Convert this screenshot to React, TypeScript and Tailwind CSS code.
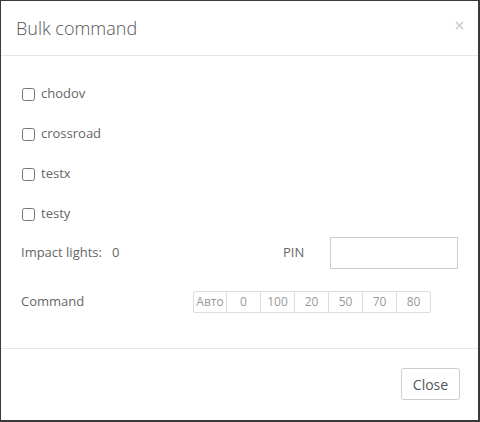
import { X } from 'lucide-react';

const lights = ['chodov', 'crossroad', 'testx', 'testy'];
const commands = ['Авто', '0', '100', '20', '50', '70', '80'];

export default function App() {
  return (
    <div className="w-[480px] h-[422px] bg-[#3a3a3a] pt-px pl-px font-['Open_Sans',sans-serif]">
      <div className="w-[477px] h-[419px] bg-white flex flex-col">
        {/* Header */}
        <div className="h-[55px] flex items-center justify-between pl-[15px] pr-[12px] border-b border-[#e5e5e5]">
          <span className="text-[18px] font-light text-[#555] leading-none -mt-px">Bulk command</span>
          <X className="w-[13px] h-[13px] text-[#c8c8c8] -mt-[6px]" strokeWidth={2.5} />
        </div>

        {/* Body */}
        <div className="flex-1 pl-[20px] pt-[18px] text-[13px] text-[#666]">
          {lights.map(name => (
            <label key={name} className="h-[40px] flex items-center gap-[6px]">
              <input type="checkbox" className="m-0 ml-px w-[13px] h-[13px]" />
              <span>{name}</span>
            </label>
          ))}

          <div className="h-[38px] flex items-center">
            <span className="w-[91px]">Impact lights:</span>
            <span className="w-[171px]">0</span>
            <span className="w-[47px]">PIN</span>
            <input className="w-[128px] h-[32px] border border-[#ccc] outline-none" />
          </div>

          <div className="mt-[19px] h-[22px] flex items-center">
            <span className="w-[172px]">Command</span>
            <div className="flex">
              {commands.map((c, i) => (
                <span
                  key={c}
                  className={`h-[22px] flex items-center justify-center border border-[#ddd] text-[#999] text-[12px] ${
                    i === 0 ? 'w-[34px] rounded-l-[2px]' : '-ml-px w-[35px]'
                  } ${i === commands.length - 1 ? 'rounded-r-[2px]' : ''}`}
                >
                  {c}
                </span>
              ))}
            </div>
          </div>
        </div>

        {/* Footer */}
        <div className="h-[72px] border-t border-[#e5e5e5] flex justify-end items-start pt-[19px] pr-[18px]">
          <button className="w-[59px] h-[32px] border border-[#ccc] rounded-[3px] bg-white text-[14px] text-[#555]">
            Close
          </button>
        </div>
      </div>
    </div>
  );
}
